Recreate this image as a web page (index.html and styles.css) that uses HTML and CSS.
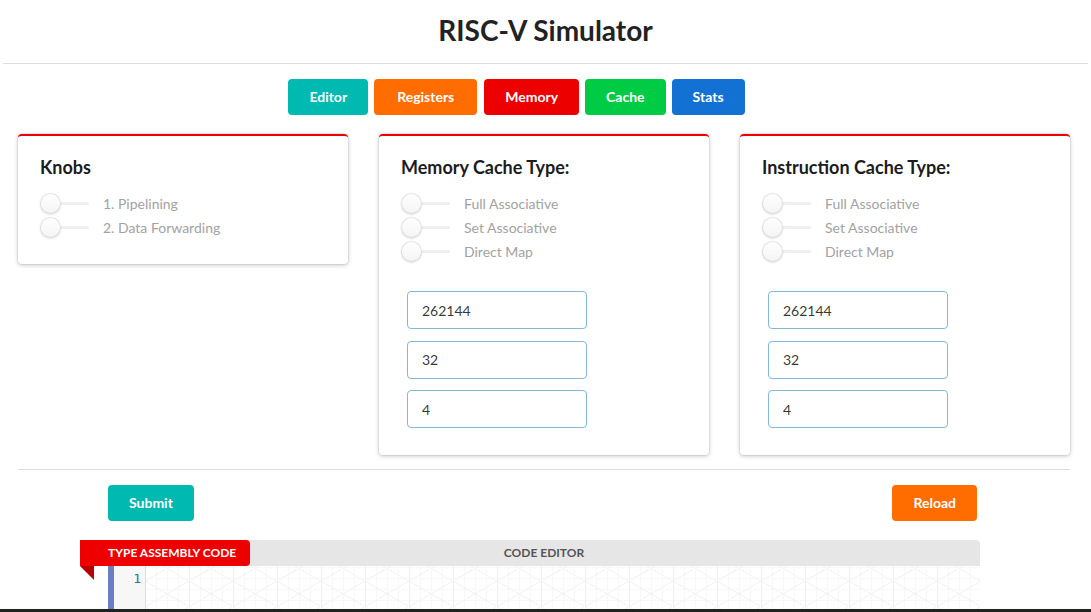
FILE: index.html
```html
<!DOCTYPE html>
<html lang="en">
<head>
<meta charset="utf-8">
<title>RISC-V Simulator</title>
<link rel="stylesheet" href="styles.css">
</head>
<body>
<header class="top">
  <h1 class="title">RISC-V Simulator</h1>
</header>

<nav class="tabs">
  <button class="btn teal">Editor</button>
  <button class="btn orange wide">Registers</button>
  <button class="btn red">Memory</button>
  <button class="btn green">Cache</button>
  <button class="btn blue">Stats</button>
</nav>

<main class="cards">
  <section class="card card-short">
    <h2 class="card-title">Knobs</h2>
    <div class="toggles">
      <label class="toggle"><span class="slider"></span><span class="toggle-text">1. Pipelining</span></label>
      <label class="toggle"><span class="slider"></span><span class="toggle-text">2. Data Forwarding</span></label>
    </div>
  </section>

  <section class="card">
    <h2 class="card-title">Memory Cache Type:</h2>
    <div class="toggles">
      <label class="toggle"><span class="slider"></span><span class="toggle-text">Full Associative</span></label>
      <label class="toggle"><span class="slider"></span><span class="toggle-text">Set Associative</span></label>
      <label class="toggle"><span class="slider"></span><span class="toggle-text">Direct Map</span></label>
    </div>
    <div class="inputs">
      <input class="field" type="text" value="262144">
      <input class="field" type="text" value="32">
      <input class="field" type="text" value="4">
    </div>
  </section>

  <section class="card">
    <h2 class="card-title">Instruction Cache Type:</h2>
    <div class="toggles">
      <label class="toggle"><span class="slider"></span><span class="toggle-text">Full Associative</span></label>
      <label class="toggle"><span class="slider"></span><span class="toggle-text">Set Associative</span></label>
      <label class="toggle"><span class="slider"></span><span class="toggle-text">Direct Map</span></label>
    </div>
    <div class="inputs">
      <input class="field" type="text" value="262144">
      <input class="field" type="text" value="32">
      <input class="field" type="text" value="4">
    </div>
  </section>
</main>

<hr class="divider">

<div class="actions">
  <button class="btn teal">Submit</button>
  <button class="btn orange">Reload</button>
</div>

<div class="editor">
  <div class="editor-head">
    <span class="ribbon">TYPE ASSEMBLY CODE</span>
    <span class="editor-title">CODE EDITOR</span>
  </div>
  <div class="editor-body">
    <div class="gutter"><span class="ln">1</span></div>
    <div class="code"></div>
  </div>
</div>

<div class="bottom-bar"></div>
</body>
</html>
```

FILE: styles.css
```css
* { box-sizing: border-box; }

body {
  margin: 0;
  font-family: Lato, "Helvetica Neue", Arial, sans-serif;
  font-size: 14px;
  color: rgba(0, 0, 0, 0.87);
  background: #fff;
}

.top {
  height: 64px;
  margin: 0 3px;
  border-bottom: 1px solid #dedede;
  padding-top: 12px;
}

.title {
  margin: 0;
  text-align: center;
  font-size: 28px;
  line-height: 36px;
  font-weight: 700;
  color: #222;
}

.tabs {
  display: flex;
  justify-content: center;
  gap: 6px;
  margin-top: 15px;
  padding-right: 58px;
}

.btn {
  font-family: Lato, "Helvetica Neue", Arial, sans-serif;
  font-size: 14px;
  font-weight: 700;
  line-height: 14px;
  padding: 11px 21px;
  border: none;
  border-radius: 4px;
  color: #fff;
  cursor: pointer;
}

.btn.wide { padding: 11px 23px; margin-right: 1px; }

.teal { background: #00b9b0; }
.orange { background: #ff6c00; }
.red { background: #ed0000; }
.green { background: #00cb45; }
.blue { background: #1271d2; }

.cards {
  display: grid;
  grid-template-columns: repeat(3, 330px);
  column-gap: 31px;
  align-items: start;
  margin-top: 19px;
  padding-left: 18px;
}

.card {
  background: #fff;
  border-top: 2px solid #ee0000;
  border-radius: 4px;
  box-shadow: 0 0 0 1px rgba(34, 36, 38, 0.05), 0 1px 4px 0 rgba(34, 36, 38, 0.28);
  padding: 20px 22px 27px;
}

.card-short { padding-bottom: 25px; }

.card-title {
  margin: 0;
  font-size: 18px;
  line-height: 23px;
  font-weight: 700;
  color: #1b1c1d;
}

.toggles {
  margin-top: 12px;
  display: flex;
  flex-direction: column;
}

.toggle {
  display: flex;
  align-items: center;
  height: 24px;
}

.slider {
  position: relative;
  width: 49px;
  height: 21px;
  flex-shrink: 0;
}

.slider::before {
  content: "";
  position: absolute;
  left: 0;
  top: 9px;
  width: 49px;
  height: 3px;
  border-radius: 3px;
  background: #efefef;
}

.slider::after {
  content: "";
  position: absolute;
  left: 0;
  top: 0;
  width: 21px;
  height: 21px;
  border-radius: 50%;
  background: linear-gradient(#ffffff, #f4f4f4);
  box-shadow: 0 1px 2px 0 rgba(34, 36, 38, 0.12), inset 0 0 0 1px rgba(34, 36, 38, 0.12);
}

.toggle-text {
  margin-left: 14px;
  font-size: 14px;
  color: #a2a2a2;
}

.inputs {
  display: flex;
  flex-direction: column;
  gap: 11.5px;
  margin-top: 28px;
  padding-left: 6px;
}

.field {
  width: 180px;
  height: 38px;
  border: 1px solid #85b7d9;
  border-radius: 4px;
  padding: 0 14px;
  font-family: Lato, "Helvetica Neue", Arial, sans-serif;
  font-size: 14px;
  color: rgba(0, 0, 0, 0.8);
  background: #fff;
  outline: none;
}

.divider {
  height: 0;
  border: 0;
  border-top: 1px solid #dcdcdc;
  margin: 14px 21px 0 18px;
}

.actions {
  display: flex;
  justify-content: space-between;
  margin-top: 15px;
  padding: 0 114px 0 108px;
}

.editor {
  margin: 19px 111px 0 108px;
}

.editor-head {
  position: relative;
  height: 26px;
  background: #e6e6e6;
  border-radius: 0 4px 0 0;
  text-align: center;
}

.editor-title {
  font-size: 12px;
  line-height: 26px;
  font-weight: 700;
  color: #555;
}

.ribbon {
  position: absolute;
  left: -28px;
  top: 0;
  width: 170px;
  height: 26px;
  padding-left: 28px;
  background: #ee0000;
  border-radius: 0 4px 4px 0;
  color: #fff;
  font-size: 12px;
  font-weight: 700;
  line-height: 26px;
  text-align: left;
}

.ribbon::after {
  content: "";
  position: absolute;
  left: 0;
  top: 100%;
  width: 0;
  height: 0;
  border-top: 14px solid #b80000;
  border-left: 14px solid transparent;
}

.editor-body {
  display: flex;
  height: 320px;
}

.gutter {
  width: 38px;
  border-left: 6px solid #6b7fc3;
  border-right: 1px solid #dddddd;
  background: #f7f7f7;
  text-align: right;
  padding: 3px 4px 0 0;
}

.ln {
  font-family: "DejaVu Sans Mono", "Liberation Mono", monospace;
  font-size: 13px;
  line-height: 19px;
  color: #237893;
}

.code {
  flex: 1;
  background-color: #fff;
  background-image:
    repeating-linear-gradient(30deg, transparent 0 21px, #f4f4f4 21px 22px),
    repeating-linear-gradient(-30deg, transparent 0 21px, #f4f4f4 21px 22px),
    repeating-linear-gradient(90deg, transparent 0 43px, #efefef 43px 44px),
    repeating-linear-gradient(90deg, transparent 0 10px, #f8f8f8 10px 11px),
    repeating-linear-gradient(0deg, transparent 0 10px, #f8f8f8 10px 11px);
}

.bottom-bar {
  position: fixed;
  left: 0;
  right: 0;
  bottom: 0;
  height: 3px;
  background: #1f2421;
}
```
